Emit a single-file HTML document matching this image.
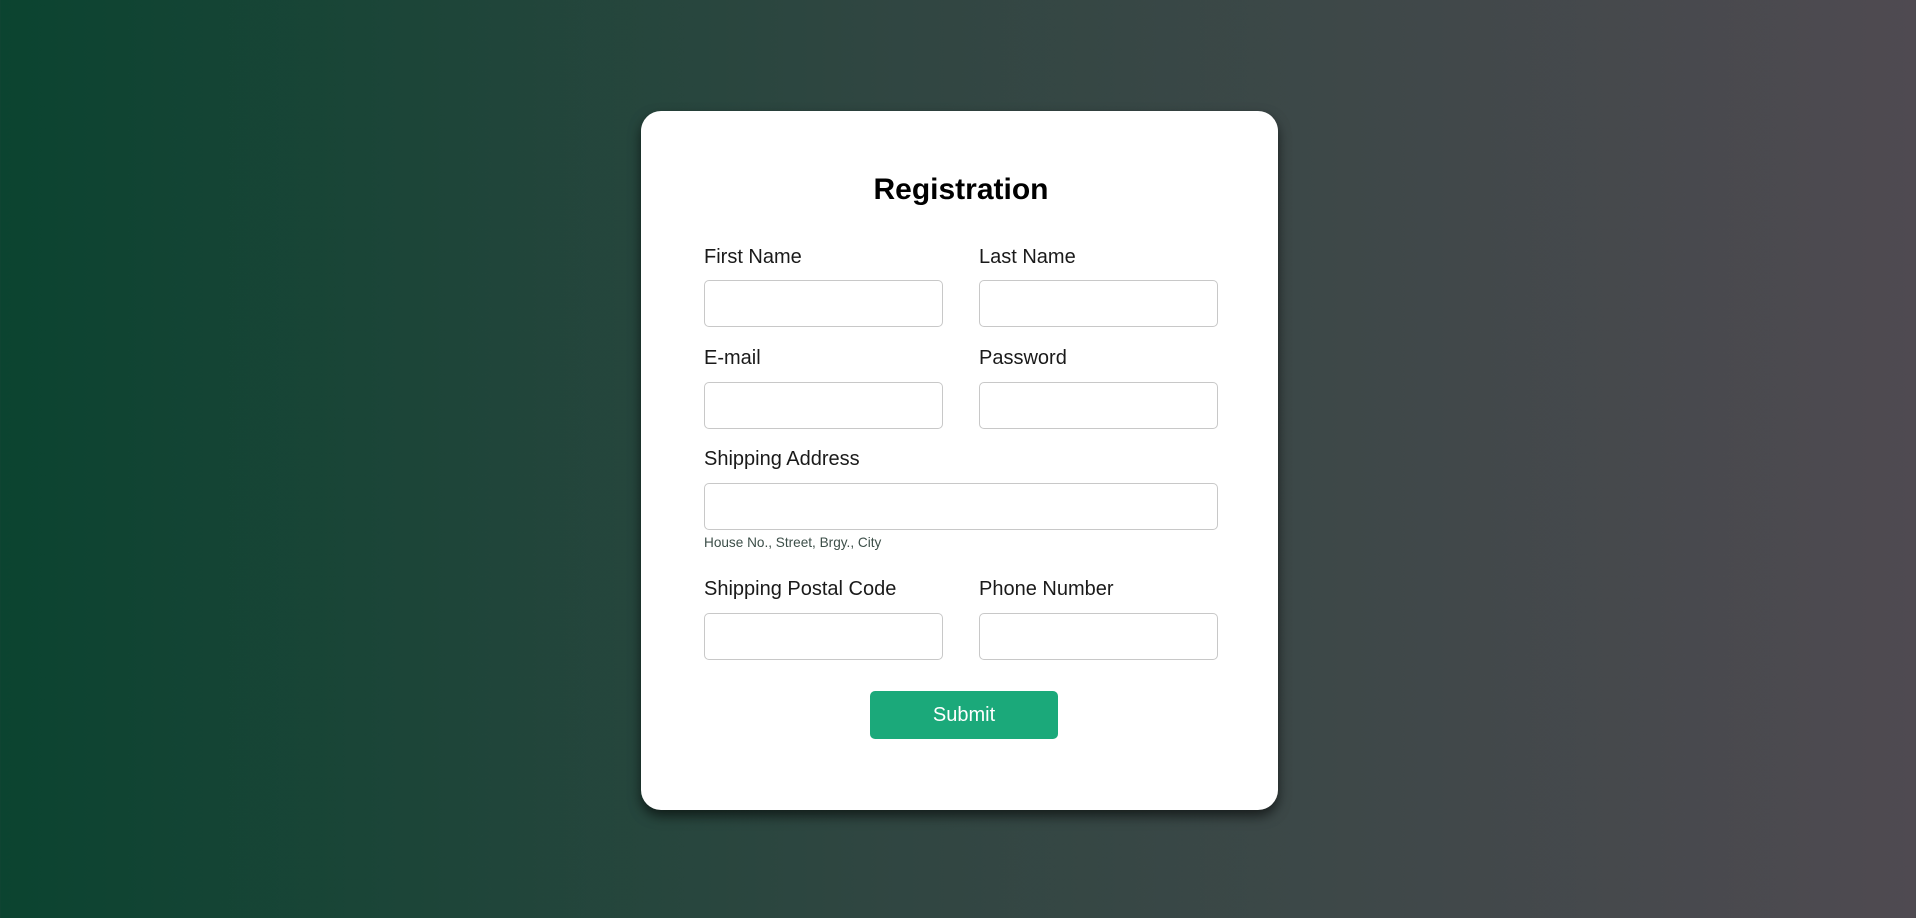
<!DOCTYPE html>
<html><head><style>
*{box-sizing:border-box;margin:0;padding:0}
html,body{width:1916px;height:918px;overflow:hidden}
body{background:linear-gradient(to right,#0b4430,#2f4641 45%,#4f4a51);font-family:"Liberation Sans",Arial,sans-serif;position:relative}
.card{position:absolute;left:641px;top:111px;width:637px;height:699px;background:#fff;border-radius:20px;box-shadow:0 6px 12px rgba(0,0,0,.6)}
h1{position:absolute;left:3px;width:100%;text-align:center;top:171px;font-size:30px;font-weight:bold;color:#000;line-height:38px}
.l{position:absolute;font-size:20px;color:#1a1a1a;line-height:24px}
.i{position:absolute;height:47px;border:1px solid #c8c8c8;border-radius:5px;background:#fff}
.h{position:absolute;font-size:13.6px;color:#3d4f49;line-height:16px}
.b{position:absolute;left:870px;top:691px;width:188px;height:48px;background:#1ba97a;border-radius:5px;color:#fff;font-size:20px;text-align:center;line-height:48px}
</style></head><body>
<div class="card"></div>
<h1>Registration</h1>
<div class="l" style="left:704px;top:245px">First Name</div>
<div class="l" style="left:979px;top:245px">Last Name</div>
<div class="i" style="left:704px;top:280px;width:239px"></div>
<div class="i" style="left:979px;top:280px;width:239px"></div>
<div class="l" style="left:704px;top:346px">E-mail</div>
<div class="l" style="left:979px;top:346px">Password</div>
<div class="i" style="left:704px;top:382px;width:239px"></div>
<div class="i" style="left:979px;top:382px;width:239px"></div>
<div class="l" style="left:704px;top:447px">Shipping Address</div>
<div class="i" style="left:704px;top:483px;width:514px"></div>
<div class="h" style="left:704px;top:535px">House No., Street, Brgy., City</div>
<div class="l" style="left:704px;top:577px">Shipping Postal Code</div>
<div class="l" style="left:979px;top:577px">Phone Number</div>
<div class="i" style="left:704px;top:613px;width:239px"></div>
<div class="i" style="left:979px;top:613px;width:239px"></div>
<div class="b">Submit</div>
</body></html>
